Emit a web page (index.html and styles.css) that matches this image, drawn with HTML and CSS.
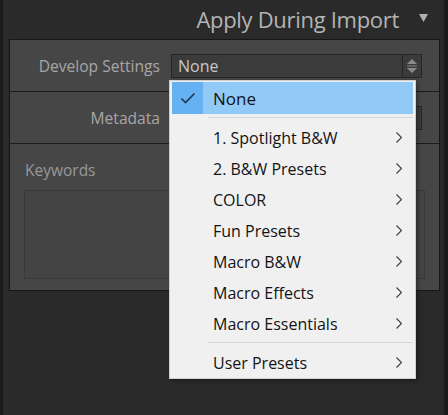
FILE: index.html
```html
<!DOCTYPE html>
<html>
<head>
<meta charset="utf-8">
<link rel="stylesheet" href="styles.css">
</head>
<body>
<div class="app">
  <div class="header">
    <span class="title">Apply During Import</span>
    <svg class="caret" width="9" height="8" viewBox="0 0 9 8"><path d="M0 0 L9 0 L4.5 8 Z" fill="#b0b0b0"/></svg>
  </div>
  <div class="panel">
    <div class="row">
      <span class="label">Develop Settings</span>
      <div class="select">
        <span class="value">None</span>
        <span class="stepper">
          <svg width="12" height="16" viewBox="0 0 12 16"><path d="M6 1 L11 6 L1 6 Z" fill="#8a8a8a"/><rect x="1" y="7.5" width="10" height="1" fill="#8a8a8a"/><path d="M1 10 L11 10 L6 15 Z" fill="#8a8a8a"/></svg>
        </span>
      </div>
    </div>
    <div class="row">
      <span class="label">Metadata</span>
      <div class="select"></div>
    </div>
    <div class="keywords">
      <span class="klabel">Keywords</span>
      <div class="kbox"></div>
    </div>
  </div>

  <div class="menu">
    <div class="item selected">
      <span class="check"><svg width="16" height="12" viewBox="0 0 16 12"><path d="M1.5 6.5 L5.5 10.5 L14.5 1.5" fill="none" stroke="#1d3652" stroke-width="1.6"/></svg></span>
      <span class="text">None</span>
    </div>
    <div class="sep"></div>
    <div class="item"><span class="check"></span><span class="text">1. Spotlight B&amp;W</span><svg class="chev" width="6" height="11" viewBox="0 0 6 11"><path d="M0.5 0.5 L5.5 5.5 L0.5 10.5" fill="none" stroke="#3a3a3a" stroke-width="1.1"/></svg></div>
    <div class="item"><span class="check"></span><span class="text">2. B&amp;W Presets</span><svg class="chev" width="6" height="11" viewBox="0 0 6 11"><path d="M0.5 0.5 L5.5 5.5 L0.5 10.5" fill="none" stroke="#3a3a3a" stroke-width="1.1"/></svg></div>
    <div class="item"><span class="check"></span><span class="text">COLOR</span><svg class="chev" width="6" height="11" viewBox="0 0 6 11"><path d="M0.5 0.5 L5.5 5.5 L0.5 10.5" fill="none" stroke="#3a3a3a" stroke-width="1.1"/></svg></div>
    <div class="item"><span class="check"></span><span class="text">Fun Presets</span><svg class="chev" width="6" height="11" viewBox="0 0 6 11"><path d="M0.5 0.5 L5.5 5.5 L0.5 10.5" fill="none" stroke="#3a3a3a" stroke-width="1.1"/></svg></div>
    <div class="item"><span class="check"></span><span class="text">Macro B&amp;W</span><svg class="chev" width="6" height="11" viewBox="0 0 6 11"><path d="M0.5 0.5 L5.5 5.5 L0.5 10.5" fill="none" stroke="#3a3a3a" stroke-width="1.1"/></svg></div>
    <div class="item"><span class="check"></span><span class="text">Macro Effects</span><svg class="chev" width="6" height="11" viewBox="0 0 6 11"><path d="M0.5 0.5 L5.5 5.5 L0.5 10.5" fill="none" stroke="#3a3a3a" stroke-width="1.1"/></svg></div>
    <div class="item"><span class="check"></span><span class="text">Macro Essentials</span><svg class="chev" width="6" height="11" viewBox="0 0 6 11"><path d="M0.5 0.5 L5.5 5.5 L0.5 10.5" fill="none" stroke="#3a3a3a" stroke-width="1.1"/></svg></div>
    <div class="sep"></div>
    <div class="item"><span class="check"></span><span class="text">User Presets</span><svg class="chev" width="6" height="11" viewBox="0 0 6 11"><path d="M0.5 0.5 L5.5 5.5 L0.5 10.5" fill="none" stroke="#3a3a3a" stroke-width="1.1"/></svg></div>
  </div>
</div>
</body>
</html>
```
FILE: styles.css
```css
html, body {
  margin: 0;
  padding: 0;
}
body {
  background: #1b1b1b;
  font-family: "Open Sans", "Noto Sans", sans-serif;
  width: 448px;
  height: 415px;
  overflow: hidden;
}
.app {
  position: relative;
  margin-left: 3px;
  width: 441px;
  height: 415px;
  background: #2a2a2a;
}
.header {
  height: 39px;
  display: flex;
  justify-content: flex-end;
  align-items: center;
  padding-right: 16px;
  box-sizing: border-box;
}
.title {
  font-size: 22px;
  color: #b4b4b4;
  letter-spacing: -0.3px;
  margin-right: 20px;
  line-height: 1;
  margin-top: -1px;
}
.caret {
  margin-top: -4px;
}
.panel {
  margin-left: 6px;
  width: 431px;
  border: 1px solid #161616;
  background: #464646;
  box-sizing: border-box;
}
.row {
  height: 52px;
  display: flex;
  align-items: center;
  border-bottom: 1px solid #1c1c1c;
  box-sizing: border-box;
}
.label {
  width: 150px;
  text-align: right;
  font-size: 15.6px;
  color: #a6a6a6;
  margin-right: 11px;
  margin-top: 1px;
}
.select {
  width: 251px;
  height: 24px;
  border: 1px solid #262626;
  background: #3b3b3b;
  box-sizing: border-box;
  display: flex;
  align-items: center;
}
.value {
  flex: 1;
  font-size: 16px;
  color: #c8c8c8;
  padding-left: 6px;
}
.stepper {
  width: 18px;
  height: 22px;
  border-left: 1px solid #262626;
  display: flex;
  align-items: center;
  justify-content: center;
}
.keywords {
  height: 146px;
  padding: 14px 14px 11px 14px;
  box-sizing: border-box;
  display: flex;
  flex-direction: column;
}
.klabel {
  font-size: 15.5px;
  color: #989898;
  height: 22px;
  line-height: 22px;
  margin-bottom: 9px;
  margin-left: 1px;
  margin-top: 1px;
}
.kbox {
  flex: 1;
  background: #444444;
  border: 1px solid #3a3a3a;
}
.menu {
  position: absolute;
  left: 166px;
  top: 80px;
  width: 247px;
  height: 299px;
  background: #f0f0f0;
  border: 1px solid #cfcfcf;
  box-sizing: border-box;
  padding: 1px 2px;
  box-shadow: 2px 2px 4px rgba(0,0,0,0.35);
}
.item {
  height: 31px;
  display: flex;
  align-items: center;
  font-size: 16px;
  color: #141414;
}
.item.selected {
  height: 32px;
  background: #91c9f7;
}
.check {
  width: 31px;
  height: 100%;
  display: flex;
  align-items: center;
  justify-content: center;
}
.selected .check {
  background: #66b1f2;
}
.text {
  flex: 1;
  padding-left: 10px;
}
.selected .text {
  font-size: 17px;
}
.chev {
  margin-right: 11px;
}
.sep {
  height: 1px;
  background: #d6d6d6;
  margin: 3px 0 4px 36px;
}
```
